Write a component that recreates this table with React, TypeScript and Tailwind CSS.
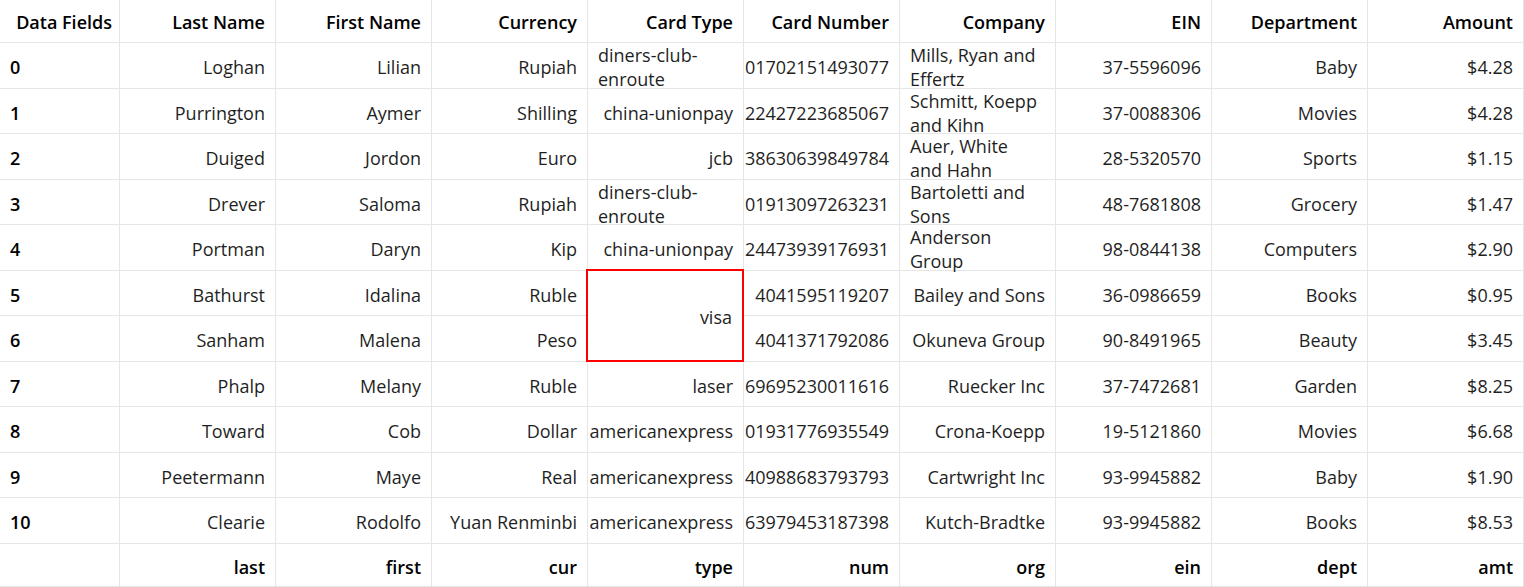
import React from "react";

type Row = {
    id: number;
    last: string;
    first: string;
    cur: string;
    type: string | null;
    num: string;
    org: React.ReactNode;
    ein: string;
    dept: string;
    amt: string;
};

const headers = ["Last Name", "First Name", "Currency", "Card Type", "Card Number", "Company", "EIN", "Department", "Amount"];
const footers = ["last", "first", "cur", "type", "num", "org", "ein", "dept", "amt"];

const rows: Row[] = [
    { id: 0, last: "Loghan", first: "Lilian", cur: "Rupiah", type: "diners-club-enroute", num: "01702151493077", org: "Mills, Ryan and Effertz", ein: "37-5596096", dept: "Baby", amt: "$4.28" },
    { id: 1, last: "Purrington", first: "Aymer", cur: "Shilling", type: "china-unionpay", num: "22427223685067", org: "Schmitt, Koepp and Kihn", ein: "37-0088306", dept: "Movies", amt: "$4.28" },
    { id: 2, last: "Duiged", first: "Jordon", cur: "Euro", type: "jcb", num: "38630639849784", org: <span className="w-full">Auer, White<br />and Hahn</span>, ein: "28-5320570", dept: "Sports", amt: "$1.15" },
    { id: 3, last: "Drever", first: "Saloma", cur: "Rupiah", type: "diners-club-enroute", num: "01913097263231", org: "Bartoletti and Sons", ein: "48-7681808", dept: "Grocery", amt: "$1.47" },
    { id: 4, last: "Portman", first: "Daryn", cur: "Kip", type: "china-unionpay", num: "24473939176931", org: "Anderson Group", ein: "98-0844138", dept: "Computers", amt: "$2.90" },
    { id: 5, last: "Bathurst", first: "Idalina", cur: "Ruble", type: "visa", num: "4041595119207", org: "Bailey and Sons", ein: "36-0986659", dept: "Books", amt: "$0.95" },
    { id: 6, last: "Sanham", first: "Malena", cur: "Peso", type: null, num: "4041371792086", org: "Okuneva Group", ein: "90-8491965", dept: "Beauty", amt: "$3.45" },
    { id: 7, last: "Phalp", first: "Melany", cur: "Ruble", type: "laser", num: "69695230011616", org: "Ruecker Inc", ein: "37-7472681", dept: "Garden", amt: "$8.25" },
    { id: 8, last: "Toward", first: "Cob", cur: "Dollar", type: "americanexpress", num: "01931776935549", org: "Crona-Koepp", ein: "19-5121860", dept: "Movies", amt: "$6.68" },
    { id: 9, last: "Peetermann", first: "Maye", cur: "Real", type: "americanexpress", num: "40988683793793", org: "Cartwright Inc", ein: "93-9945882", dept: "Baby", amt: "$1.90" },
    { id: 10, last: "Clearie", first: "Rodolfo", cur: "Yuan Renminbi", type: "americanexpress", num: "63979453187398", org: "Kutch-Bradtke", ein: "93-9945882", dept: "Books", amt: "$8.53" },
];

const base = "flex items-center border-r border-b border-[#e6e6e6] leading-[24px] min-w-0";
const cell = base + " justify-end px-[10px] pt-[4px]";
const head = base + " justify-end px-[10px] pt-[2px] font-semibold text-black";
const foot = base + " justify-end px-[10px] pt-[5px] font-semibold text-black";

export default function App() {
    return (
        <div className="w-[1524px] h-[587px] overflow-hidden bg-white text-[18px] text-[#1f1f1f]" style={{ fontFamily: '"Open Sans", "Noto Sans", sans-serif' }}>
            <div className="grid grid-cols-[120px_repeat(9,156px)] grid-rows-[43px_repeat(11,45.5px)_43px]">
                {/* header */}
                <div className={base + " justify-end pl-[10px] pr-[7px] pt-[2px] font-semibold text-black"}>Data Fields</div>
                {headers.map(h => (
                    <div key={h} className={head}>{h}</div>
                ))}

                {rows.map(r => (
                    <React.Fragment key={r.id}>
                        <div className={base + " justify-start px-[10px] pt-[4px] font-semibold text-black"}>{r.id}</div>
                        <div className={cell}>{r.last}</div>
                        <div className={cell}>{r.first}</div>
                        <div className={cell}>{r.cur}</div>
                        {r.type === "visa" ? (
                            <div className="relative z-10 row-span-2 -mt-[2px] -ml-[2px] flex items-center justify-end px-[10px] pt-[4px] border-2 border-[#ff0000] bg-white">visa</div>
                        ) : r.type !== null ? (
                            <div className={cell}>{r.type}</div>
                        ) : null}
                        <div className={cell}>{r.num}</div>
                        <div className={cell}>{r.org}</div>
                        <div className={cell}>{r.ein}</div>
                        <div className={cell}>{r.dept}</div>
                        <div className={cell}>{r.amt}</div>
                    </React.Fragment>
                ))}

                {/* footer */}
                <div className={foot}></div>
                {footers.map(f => (
                    <div key={f} className={foot}>{f}</div>
                ))}
            </div>
        </div>
    );
}
